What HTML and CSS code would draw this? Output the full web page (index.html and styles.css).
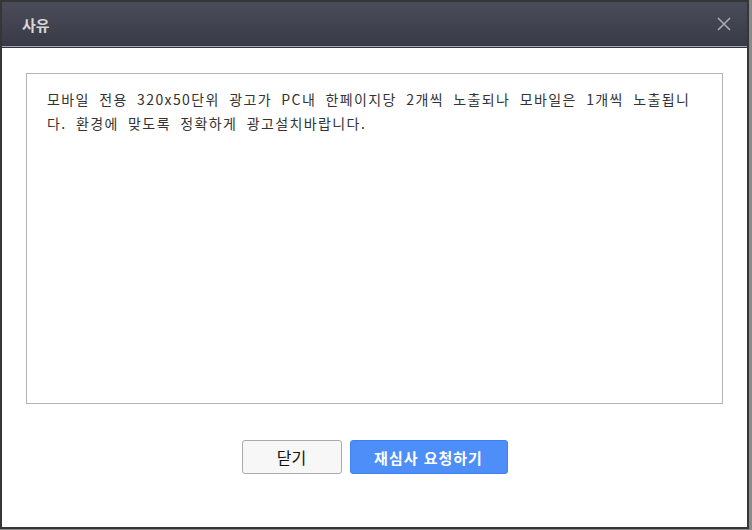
FILE: index.html
```html
<!DOCTYPE html>
<html lang="ko">

<head>
    <meta charset="UTF-8">
    <meta name="viewport"
          content="width=device-width, initial-scale=1.0">
    <title>사유</title>
    <link rel="stylesheet" href="styles.css">
</head>

<body>
    <div id="dialog">
        <div class="dialog-header">
            <span class="dialog-title">사유</span>
            <button class="dialog-close" title="닫기">
                <svg width="14" height="14" viewBox="0 0 14 14">
                    <path d="M1 1 L13 13 M13 1 L1 13" stroke="#a9abb4" stroke-width="1.6" fill="none"/>
                </svg>
            </button>
        </div>
        <div class="dialog-body">
            <div class="reason-box">모바일 전용 320x50단위 광고가 PC내 한페이지당 2개씩 노출되나 모바일은 1개씩 노출됩니다. 환경에 맞도록 정확하게 광고설치바랍니다.</div>
            <div class="button-row">
                <button class="btn btn-close">닫기</button>
                <button class="btn btn-primary">재심사 요청하기</button>
            </div>
        </div>
    </div>
</body>

</html>
```

FILE: styles.css
```css
body {
    margin: 0;
    padding: 0;
    width: 752px;
    height: 530px;
    overflow: hidden;
    background-color: #8a8a8a;
    font-family: "Noto Sans CJK KR", "Liberation Sans", sans-serif;
}

#dialog {
    width: 745px;
    height: 525px;
    border: 2px solid #363636;
    background-color: #ffffff;
    display: flex;
    flex-direction: column;
}

.dialog-header {
    height: 44px;
    display: flex;
    align-items: center;
    justify-content: space-between;
    padding: 0 14px 0 20px;
    background: linear-gradient(#4a4c59, #383a46);
    border-bottom: 1px solid #a6a8ba;
    box-shadow: 0 1px 0 #33343d;
}

.dialog-title {
    color: #d6d6d6;
    font-size: 15px;
    font-weight: bold;
}

.dialog-close {
    background: none;
    border: none;
    padding: 0;
    width: 18px;
    height: 18px;
    display: flex;
    align-items: center;
    justify-content: center;
    cursor: pointer;
}

.dialog-body {
    padding: 26px 24px 0 24px;
}

.reason-box {
    height: 316px;
    border: 1px solid #b4b4b4;
    padding: 13px 22px 0 20px;
    font-size: 14px;
    line-height: 24px;
    word-spacing: 4px;
    letter-spacing: 1.4px;
    word-break: break-all;
    color: #333333;
}

.button-row {
    display: flex;
    justify-content: center;
    gap: 8px;
    margin-top: 36px;
}

.btn {
    height: 34px;
    font-family: inherit;
    font-size: 16px;
    border-radius: 3px;
    cursor: pointer;
}

.btn-close {
    width: 100px;
    background-color: #f7f7f7;
    border: 1px solid #aaaaaa;
    color: #111111;
}

.btn-primary {
    width: 158px;
    background-color: #4d8ef8;
    border: 1px solid #3f82ee;
    color: #ffffff;
    font-weight: bold;
    font-size: 15px;
    letter-spacing: 1px;
}
```
